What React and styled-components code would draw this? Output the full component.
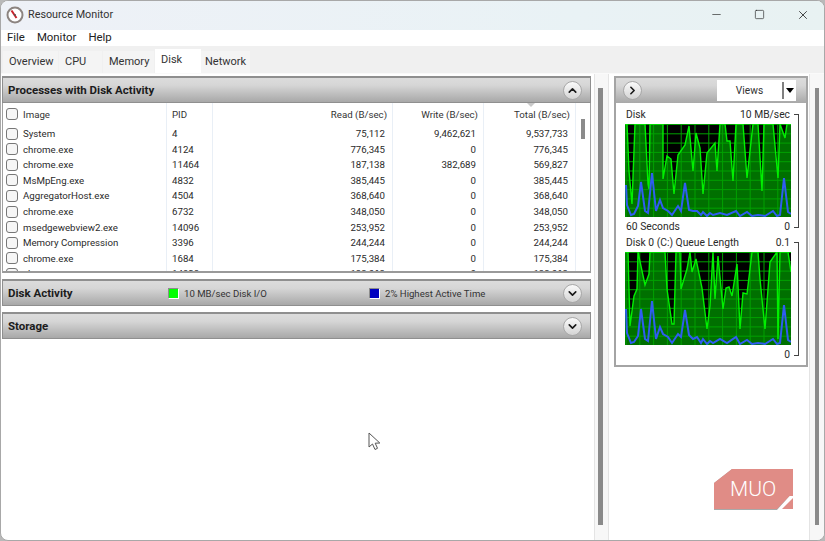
import React from "react";
import styled, { createGlobalStyle } from "styled-components";
import { Minus, Square, X, ChevronUp, ChevronDown, ChevronRight } from "lucide-react";

const rows = [
  ["System", "4", "75,112", "9,462,621", "9,537,733"],
  ["chrome.exe", "4124", "776,345", "0", "776,345"],
  ["chrome.exe", "11464", "187,138", "382,689", "569,827"],
  ["MsMpEng.exe", "4832", "385,445", "0", "385,445"],
  ["AggregatorHost.exe", "4504", "368,640", "0", "368,640"],
  ["chrome.exe", "6732", "348,050", "0", "348,050"],
  ["msedgewebview2.exe", "14096", "253,952", "0", "253,952"],
  ["Memory Compression", "3396", "244,244", "0", "244,244"],
  ["chrome.exe", "1684", "175,384", "0", "175,384"],
  ["chrome.exe", "14928", "133,063", "0", "133,063"],
];

const tabs = [
  { name: "Overview", width: 55, pad: 6 },
  { name: "CPU", width: 43, pad: 6 },
  { name: "Memory", width: 51, pad: 6 },
  { name: "Disk", width: 46, pad: 6, active: true },
  { name: "Network", width: 49, pad: 4 },
];

// points read off the reference, x and y in the 166x93 graph box
const diskGreen = "0,0 2,0 4,47 7,80 10,0 20,0 23,60 24,65 25,0 38,0 38,55 42,32 46,35 49,70 53,31 60,21 64,2 68,47 71,9 75,24 78,70 82,29 90,19 92,47 95,0 100,0 102,17 105,17 108,57 111,0 118,0 122,54 128,0 133,0 137,67 139,0 148,0 153,54 155,0 160,14 162,0 166,0";
const diskBlue = "1,61 2,81 6,91 9,90 13,82 16,58 20,87 23,89 27,49 31,87 35,76 38,84 43,87 47,91 53,82 56,87 60,59 64,86 68,87 72,87 76,91 78,88 82,92 85,89 88,91 95,89 102,91 111,87 115,92 122,88 127,92 133,91 140,92 148,87 152,92 155,91 159,54 163,88 166,90";
const queueGreen = "0,0 3,0 5,74 9,44 12,37 13,0 20,33 24,22 25,0 40,0 42,37 47,72 49,72 51,0 55,0 56,37 62,17 65,0 67,20 71,7 77,36 82,77 85,54 88,0 90,47 93,4 98,57 101,36 104,35 107,44 112,12 115,77 118,41 122,42 127,0 133,0 135,27 140,77 145,10 152,0 153,87 155,0 163,0 166,20";
const queueBlue = "1,57 2,81 6,91 9,90 13,84 16,57 20,87 23,89 27,49 31,87 35,75 38,82 43,85 47,91 53,82 56,85 60,58 64,83 68,87 72,85 76,91 78,87 82,92 85,89 88,91 95,87 102,91 111,85 115,92 122,88 127,92 133,91 140,92 148,87 152,92 155,91 159,53 163,88 166,90";

const gridX = Array.from({ length: 12 }, (_, i) => 1 + i * 13.8);
const gridY = Array.from({ length: 10 }, (_, i) => 0.5 + i * 9.3);

const Graph = ({ green, blue }) => (
  <GraphBox viewBox="0 0 166 93" width="166" height="93">
    <rect width="166" height="93" fill="#000" />
    <polygon points={`${green} 166,93 0,93`} fill="#007000" />
    {gridX.map((x) => <line key={x} x1={x} x2={x} y1="0" y2="93" stroke="#00a000" strokeWidth="1" />)}
    {gridY.map((y) => <line key={y} x1="0" x2="166" y1={y} y2={y} stroke="#00a000" strokeWidth="1" />)}
    <polyline points={green} fill="none" stroke="#00f000" strokeWidth="1.4" />
    <polyline points={blue} fill="none" stroke="#2f5df0" strokeWidth="2" />
  </GraphBox>
);

const App = () => {
  return (
    <>
      <GlobalStyle />
      <Win>
        <TitleBar>
          <AppIcon viewBox="0 0 18 18" width="18" height="18">
            <circle cx="9" cy="9" r="7.5" fill="#fff" stroke="#8c8480" strokeWidth="2" />
            <path d="M5.5 4.5 L10.5 12" stroke="#c8232c" strokeWidth="2" />
            <circle cx="9" cy="9" r="1" fill="#555" />
          </AppIcon>
          <Title>Resource Monitor</Title>
          <WinButtons>
            <WinButton><Minus size={13} strokeWidth={1.2} /></WinButton>
            <WinButton><Square size={11} strokeWidth={1.4} /></WinButton>
            <WinButton><X size={14} strokeWidth={1.4} /></WinButton>
          </WinButtons>
        </TitleBar>

        <MenuBar>
          <span>File</span>
          <span>Monitor</span>
          <span>Help</span>
        </MenuBar>

        <TabStrip>
          {tabs.map((t) => (
            <Tab key={t.name} $width={t.width} $pad={t.pad} $active={t.active}>{t.name}</Tab>
          ))}
        </TabStrip>

        <Body>
          <LeftCol>
            <SectionHead>
              <SectionTitle>Processes with Disk Activity</SectionTitle>
              <RoundBtn><ChevronUp size={13} strokeWidth={3} /></RoundBtn>
            </SectionHead>
            <TableWrap>
              <SortMark />
              <HeadRow>
                <NameCell $head><Check />Image</NameCell>
                <PidCell>PID</PidCell>
                <NumCell $head $w={180}>Read (B/sec)</NumCell>
                <NumCell $head $w={91}>Write (B/sec)</NumCell>
                <NumCell $head $w={92}>Total (B/sec)</NumCell>
              </HeadRow>
              {rows.map((r, i) => (
                <Row key={i}>
                  <NameCell><Check />{r[0]}</NameCell>
                  <PidCell>{r[1]}</PidCell>
                  <NumCell $w={180}>{r[2]}</NumCell>
                  <NumCell $w={91}>{r[3]}</NumCell>
                  <NumCell $w={92}>{r[4]}</NumCell>
                </Row>
              ))}
              <TableThumb />
            </TableWrap>

            <SectionHead $gap>
              <SectionTitle>Disk Activity</SectionTitle>
              <Legend $x={165}><Swatch $color="#00ff00" />10 MB/sec Disk I/O</Legend>
              <Legend $x={366}><Swatch $color="#0000c0" />2% Highest Active Time</Legend>
              <RoundBtn><ChevronDown size={13} strokeWidth={3} /></RoundBtn>
            </SectionHead>
            <SectionHead $gap>
              <SectionTitle>Storage</SectionTitle>
              <RoundBtn><ChevronDown size={13} strokeWidth={3} /></RoundBtn>
            </SectionHead>
          </LeftCol>

          <ScrollCol $pad={3}><Thumb $w={5} /></ScrollCol>

          <RightCol>
            <GraphPanel>
              <GraphHead>
                <RoundBtn><ChevronRight size={13} strokeWidth={3} /></RoundBtn>
                <Views>
                  <ViewsLabel>Views</ViewsLabel>
                  <ViewsArrow />
                </Views>
              </GraphHead>
              <GraphBlock>
                <GraphStack>
                  <LabelRow><span>Disk</span><span>10 MB/sec</span></LabelRow>
                  <Graph green={diskGreen} blue={diskBlue} />
                  <LabelRow $low><span>60 Seconds</span><span>0</span></LabelRow>
                </GraphStack>
                <Bracket />
              </GraphBlock>
              <GraphBlock $second>
                <GraphStack>
                  <LabelRow><span>Disk 0 (C:) Queue Length</span><span>0.1</span></LabelRow>
                  <Graph green={queueGreen} blue={queueBlue} />
                  <LabelRow $low><span></span><span>0</span></LabelRow>
                </GraphStack>
                <Bracket />
              </GraphBlock>
            </GraphPanel>
          </RightCol>

          <ScrollCol $pad={5}><Thumb $w={4} /></ScrollCol>
        </Body>

        <Cursor viewBox="0 0 13 19" width="13" height="19">
          <path d="M1 1 L1 15 L4.5 12 L7 17.5 L9.5 16.3 L7.2 11.2 L11.8 11 Z" fill="#fff" stroke="#555" strokeWidth="1" />
        </Cursor>

        <Logo>
          <svg viewBox="0 0 80 42" width="80" height="42">
            <path d="M18 0 L79 0 L79 27 L75.5 27 L63 41 L0 41 L0 14 Z" fill="#a9a9a9" />
            <path d="M18 0 L79 0 L79 27 L75.5 27 L63 40 L0 40 L0 14 Z" fill="#e08c86" />
            <path d="M79 29 L79 40 L68 40 Z" fill="#e08c86" />
          </svg>
          <LogoText>MUO</LogoText>
        </Logo>
      </Win>
    </>
  );
};

export default App;

const GlobalStyle = createGlobalStyle`
  * { box-sizing: border-box; }
  html, body { margin: 0; padding: 0; background: #b9b9b9; }
  body {
    font-family: "Roboto", "Open Sans", sans-serif;
    font-size: 9.7px;
    color: #222;
  }
`;

const Win = styled.div`
  position: relative;
  width: 825px;
  height: 541px;
  border: 1px solid #a8a8a8;
  border-radius: 8px;
  background: #fff;
  overflow: hidden;
  display: flex;
  flex-direction: column;
`;

const TitleBar = styled.div`
  height: 29px;
  display: flex;
  align-items: center;
  padding: 0 0 1px 5px;
  background: linear-gradient(90deg, #eef1f7, #e9f2f5 70%, #e8f2f2);
`;

const AppIcon = styled.svg`
  margin-right: 4px;
`;

const Title = styled.div`
  font-size: 10.8px;
  color: #333;
  margin-bottom: 2px;
`;

const WinButtons = styled.div`
  margin-left: auto;
  display: flex;
  margin-top: -1px;
`;

const WinButton = styled.div`
  width: 43px;
  height: 20px;
  display: flex;
  align-items: center;
  justify-content: center;
  color: #222;
`;

const MenuBar = styled.div`
  height: 16px;
  display: flex;
  align-items: center;
  gap: 12px;
  padding: 0 0 3px 6px;
  font-size: 11.4px;
  color: #222;
`;

const TabStrip = styled.div`
  height: 28px;
  display: flex;
  align-items: flex-end;
  padding-left: 2px;
  background: #f0f0f0;
  border-bottom: 1px solid #fafafa;
`;

const Tab = styled.div`
  width: ${(p) => p.$width}px;
  height: ${(p) => (p.$active ? 24 : 22)}px;
  padding-left: ${(p) => p.$pad}px;
  padding-top: ${(p) => (p.$active ? 3.5 : 4)}px;
  margin-right: ${(p) => (p.$active ? 0 : 1)}px;
  background: ${(p) => (p.$active ? "#fff" : "#f4f4f4")};
  font-size: 11px;
  color: #333;
`;

const Body = styled.div`
  flex: 1;
  display: flex;
  min-height: 0;
`;

const LeftCol = styled.div`
  width: 594px;
  padding: 2px 3px 0 1px;
  border-right: 1px solid #e4e4e4;
`;

const SectionHead = styled.div`
  position: relative;
  height: 27px;
  margin-top: ${(p) => (p.$gap ? 6 : 0)}px;
  display: flex;
  align-items: center;
  padding: 0 8px 0 5px;
  border: 1px solid #8f8f8f;
  border-top-width: 2px;
  background: linear-gradient(#dcdcdc, #d6d6d6 30%, #a8a8a8);
`;

const SectionTitle = styled.div`
  font-weight: 700;
  font-size: 11.5px;
  color: #1c1c1c;
`;

const Legend = styled.div`
  display: flex;
  align-items: center;
  font-size: 9.6px;
  color: #333;
  position: absolute;
  left: ${(p) => p.$x}px;
`;

const Swatch = styled.span`
  width: 11px;
  height: 11px;
  margin-right: 5px;
  background: ${(p) => p.$color};
  border: 1px solid;
  border-color: #8c8c8c #fff #fff #8c8c8c;
`;

const RoundBtn = styled.div`
  margin-left: auto;
  width: 19px;
  height: 19px;
  border-radius: 50%;
  display: flex;
  align-items: center;
  justify-content: center;
  border: 1px solid #a8a8a8;
  background: linear-gradient(#fafafa, #d4d4d4);
  color: #1a1a1a;
`;

const TableWrap = styled.div`
  position: relative;
  height: 170px;
  overflow: hidden;
  background: #fff;
  border: 1px solid #a0a0a0;
  border-top: 0;
  border-bottom: 2px solid #9a9a9a;
`;

const SortMark = styled.div`
  position: absolute;
  left: 524px;
  top: 0;
  width: 0;
  height: 0;
  border-left: 4px solid transparent;
  border-right: 4px solid transparent;
  border-top: 4px solid #c8c8c8;
`;

const Row = styled.div`
  display: flex;
  height: 15.6px;
  align-items: center;
  color: #2a2a2a;
`;

const HeadRow = styled(Row)`
  height: 22.8px;
  color: #333;
`;

const NameCell = styled.div`
  width: 164px;
  height: 100%;
  display: flex;
  align-items: center;
  padding-left: 3px;
  border-right: 1px solid #e9eff6;
`;

const PidCell = styled.div`
  width: 46px;
  height: 100%;
  display: flex;
  align-items: center;
  padding-left: 5px;
  border-right: 1px solid #e9eff6;
`;

const NumCell = styled.div`
  width: ${(p) => p.$w}px;
  height: 100%;
  display: flex;
  align-items: center;
  justify-content: flex-end;
  padding-right: ${(p) => (p.$head ? 5 : 7)}px;
  border-right: 1px solid #e9eff6;
`;

const Check = styled.span`
  width: 12px;
  height: 12px;
  flex: none;
  margin-right: 5px;
  border: 1px solid #777;
  border-radius: 3px;
  background: #f6f6f6;
`;

const TableThumb = styled.div`
  position: absolute;
  left: 578px;
  top: 16px;
  width: 4px;
  height: 20px;
  background: #8b8b8b;
`;

const ScrollCol = styled.div`
  width: 14px;
  padding: 14px 0 0 ${(p) => p.$pad}px;
  background: #f7f7f7;
  border-right: 1px solid #e4e4e4;
  &:last-child { border-right: 0; }
`;

const Thumb = styled.div`
  width: ${(p) => p.$w}px;
  height: 437px;
  background: #8a8a8a;
`;

const RightCol = styled.div`
  width: 201px;
  padding: 2px 0 0 5px;
  border-right: 1px solid #e4e4e4;
`;

const GraphPanel = styled.div`
  width: 194px;
  height: 291px;
  border: 2px solid #a4a4a4;
`;

const GraphHead = styled.div`
  height: 25px;
  display: flex;
  align-items: center;
  padding: 0 10px 0 7px;
  background: linear-gradient(#dcdcdc, #d6d6d6 30%, #a8a8a8);
  ${RoundBtn} { margin-left: 0; }
`;

const Views = styled.div`
  margin-left: auto;
  width: 79px;
  height: 21px;
  display: flex;
  align-items: center;
  background: #fff;
`;

const ViewsLabel = styled.div`
  width: 65px;
  text-align: center;
  font-size: 10.2px;
  color: #333;
`;

const ViewsArrow = styled.div`
  height: 17px;
  flex: 1;
  border-left: 2px solid #808080;
  display: flex;
  align-items: center;
  justify-content: center;
  &::after {
    content: "";
    border-left: 4px solid transparent;
    border-right: 4px solid transparent;
    border-top: 5px solid #000;
  }
`;

const GraphBlock = styled.div`
  display: flex;
  padding: ${(p) => (p.$second ? "2px 0 0 9px" : "5px 0 0 9px")};
`;

const GraphStack = styled.div`
  width: 166px;
  display: flex;
  flex-direction: column;
`;

const LabelRow = styled.div`
  height: ${(p) => (p.$low ? 17 : 16)}px;
  display: flex;
  justify-content: space-between;
  align-items: ${(p) => (p.$low ? "flex-end" : "flex-start")};
  padding: 0 1px;
  font-size: 10.3px;
  line-height: 14px;
  color: #2a2a2a;
`;

const GraphBox = styled.svg`
  display: block;
`;

const Bracket = styled.div`
  width: 5px;
  margin: 6px 0 6px 3px;
  border: 1px solid #444;
  border-left: 0;
`;

const Cursor = styled.svg`
  position: absolute;
  left: 367px;
  top: 431px;
`;

const Logo = styled.div`
  position: absolute;
  left: 713px;
  top: 468px;
  width: 80px;
  height: 42px;
  svg { display: block; }
`;

const LogoText = styled.span`
  position: absolute;
  left: 16px;
  top: 8px;
  font-family: "Roboto", sans-serif;
  font-weight: 300;
  font-size: 21px;
  line-height: 24px;
  color: #fff;
`;
